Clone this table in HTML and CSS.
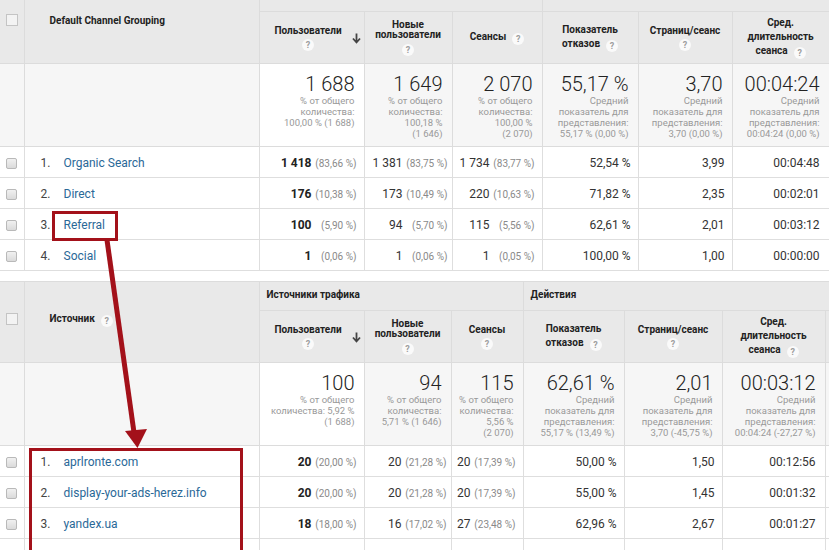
FILE: index.html
```html
<!DOCTYPE html>
<html lang="ru">
<head>
<meta charset="utf-8">
<title>Отчёт по каналам</title>
<link rel="stylesheet" href="styles.css">
</head>
<body>
<div class="page">
  <table class="ga ga-top">
    <colgroup>
      <col class="w-cb"><col class="w-dim"><col class="w105"><col class="w88"><col class="w90"><col class="w96"><col class="w94"><col class="w97">
    </colgroup>
    <thead>
      <tr class="grp">
        <th class="cb" rowspan="2"><span class="chk-head"></span></th>
        <th class="dimh" rowspan="2">Default Channel Grouping</th>
        <th class="grph" colspan="3"></th>
        <th class="grph" colspan="3"></th>
      </tr>
      <tr class="cols">
        <th class="sorted-h"><div class="mh"><div class="lbl">Пользователи<br><i class="q blk">?</i></div><svg class="sort" width="9" height="11" viewBox="0 0 9 11"><path d="M4.5 0.5v8M1 5.5l3.5 4 3.5-4" fill="none" stroke="#444" stroke-width="1.8"/></svg></div></th>
        <th><div class="mh"><div class="lbl tight">Новые<br>пользователи<br><i class="q blk t">?</i></div></div></th>
        <th><div class="mh"><div class="lbl">Сеансы<i class="q in">?</i></div></div></th>
        <th><div class="mh"><div class="lbl">Показатель<br>отказов<i class="q in">?</i></div></div></th>
        <th><div class="mh"><div class="lbl">Страниц/сеанс<br><i class="q blk">?</i></div></div></th>
        <th><div class="mh"><div class="lbl">Сред.<br>длительность<br>сеанса<i class="q in">?</i></div></div></th>
      </tr>
    </thead>
    <tbody>
      <tr class="tot">
        <td class="cb"></td><td></td>
        <td class="sorted"><div class="big">1 688</div><div class="sub">% от общего<br>количества:<br>100,00 % (1 688)</div></td>
        <td><div class="big">1 649</div><div class="sub">% от общего<br>количества:<br>100,18 %<br>(1 646)</div></td>
        <td><div class="big">2 070</div><div class="sub">% от общего<br>количества:<br>100,00 %<br>(2 070)</div></td>
        <td><div class="big">55,17 %</div><div class="sub">Средний<br>показатель для<br>представления:<br>55,17 % (0,00 %)</div></td>
        <td><div class="big">3,70</div><div class="sub">Средний<br>показатель для<br>представления:<br>3,70 (0,00 %)</div></td>
        <td><div class="big">00:04:24</div><div class="sub">Средний<br>показатель для<br>представления:<br>00:04:24 (0,00 %)</div></td>
      </tr>
      <tr class="row">
        <td class="cb"><span class="chk"></span></td>
        <td class="dim"><span class="n">1.</span><a href="#">Organic Search</a></td>
        <td class="m"><b>1 418</b><span class="p">(83,66 %)</span></td>
        <td class="m nu">1 381<span class="p">(83,75 %)</span></td>
        <td class="m">1 734<span class="p">(83,77 %)</span></td>
        <td class="m">52,54 %</td><td class="m">3,99</td><td class="m r9">00:04:48</td>
      </tr>
      <tr class="row">
        <td class="cb"><span class="chk"></span></td>
        <td class="dim"><span class="n">2.</span><a href="#">Direct</a></td>
        <td class="m"><b>176</b><span class="p">(10,38 %)</span></td>
        <td class="m nu">173<span class="p">(10,49 %)</span></td>
        <td class="m">220<span class="p">(10,63 %)</span></td>
        <td class="m">71,82 %</td><td class="m">2,35</td><td class="m r9">00:02:01</td>
      </tr>
      <tr class="row">
        <td class="cb"><span class="chk"></span></td>
        <td class="dim"><span class="n">3.</span><a href="#">Referral</a></td>
        <td class="m"><b>100</b><span class="p">(5,90 %)</span></td>
        <td class="m nu">94<span class="p">(5,70 %)</span></td>
        <td class="m">115<span class="p">(5,56 %)</span></td>
        <td class="m">62,61 %</td><td class="m">2,01</td><td class="m r9">00:03:12</td>
      </tr>
      <tr class="row">
        <td class="cb"><span class="chk"></span></td>
        <td class="dim"><span class="n">4.</span><a href="#">Social</a></td>
        <td class="m"><b>1</b><span class="p">(0,06 %)</span></td>
        <td class="m nu">1<span class="p">(0,06 %)</span></td>
        <td class="m">1<span class="p">(0,05 %)</span></td>
        <td class="m">100,00 %</td><td class="m">1,00</td><td class="m r9">00:00:00</td>
      </tr>
    </tbody>
  </table>

  <table class="ga ga-bot">
    <colgroup>
      <col class="w-cb"><col class="w-dim"><col class="w105"><col class="w87"><col class="w72"><col class="w101"><col class="w98"><col class="w103"><col class="w40">
    </colgroup>
    <thead>
      <tr class="grp">
        <th class="cb" rowspan="2"><span class="chk-head"></span></th>
        <th class="dimh" rowspan="2">Источник<i class="q in">?</i></th>
        <th class="grph" colspan="3">Источники трафика</th>
        <th class="grph" colspan="4">Действия</th>
      </tr>
      <tr class="cols">
        <th class="sorted-h"><div class="mh"><div class="lbl">Пользователи<br><i class="q blk">?</i></div><svg class="sort" width="9" height="11" viewBox="0 0 9 11"><path d="M4.5 0.5v8M1 5.5l3.5 4 3.5-4" fill="none" stroke="#444" stroke-width="1.8"/></svg></div></th>
        <th><div class="mh"><div class="lbl tight">Новые<br>пользователи<br><i class="q blk t">?</i></div></div></th>
        <th><div class="mh"><div class="lbl">Сеансы<br><i class="q blk">?</i></div></div></th>
        <th><div class="mh"><div class="lbl">Показатель<br>отказов<i class="q in">?</i></div></div></th>
        <th><div class="mh"><div class="lbl">Страниц/сеанс<br><i class="q blk">?</i></div></div></th>
        <th><div class="mh"><div class="lbl">Сред.<br>длительность<br>сеанса<i class="q in">?</i></div></div></th>
        <th></th>
      </tr>
    </thead>
    <tbody>
      <tr class="tot">
        <td class="cb"></td><td></td>
        <td class="sorted"><div class="big">100</div><div class="sub">% от общего<br>количества: 5,92 %<br>(1 688)</div></td>
        <td><div class="big">94</div><div class="sub">% от общего<br>количества:<br>5,71 % (1 646)</div></td>
        <td><div class="big">115</div><div class="sub">% от общего<br>количества:<br>5,56 %<br>(2 070)</div></td>
        <td><div class="big">62,61 %</div><div class="sub">Средний<br>показатель для<br>представления:<br>55,17 % (13,49 %)</div></td>
        <td><div class="big">2,01</div><div class="sub">Средний<br>показатель для<br>представления:<br>3,70 (-45,75 %)</div></td>
        <td><div class="big">00:03:12</div><div class="sub">Средний<br>показатель для<br>представления:<br>00:04:24 (-27,27 %)</div></td>
        <td></td>
      </tr>
      <tr class="row">
        <td class="cb"><span class="chk"></span></td>
        <td class="dim"><span class="n">1.</span><a href="#">aprlronte.com</a></td>
        <td class="m"><b>20</b><span class="p">(20,00 %)</span></td>
        <td class="m nu">20<span class="p">(21,28 %)</span></td>
        <td class="m">20<span class="p">(17,39 %)</span></td>
        <td class="m">50,00 %</td><td class="m">1,50</td><td class="m r9">00:12:56</td><td></td>
      </tr>
      <tr class="row">
        <td class="cb"><span class="chk"></span></td>
        <td class="dim"><span class="n">2.</span><a href="#">display-your-ads-herez.info</a></td>
        <td class="m"><b>20</b><span class="p">(20,00 %)</span></td>
        <td class="m nu">20<span class="p">(21,28 %)</span></td>
        <td class="m">20<span class="p">(17,39 %)</span></td>
        <td class="m">55,00 %</td><td class="m">1,45</td><td class="m r9">00:01:32</td><td></td>
      </tr>
      <tr class="row">
        <td class="cb"><span class="chk"></span></td>
        <td class="dim"><span class="n">3.</span><a href="#">yandex.ua</a></td>
        <td class="m"><b>18</b><span class="p">(18,00 %)</span></td>
        <td class="m nu">16<span class="p">(17,02 %)</span></td>
        <td class="m">27<span class="p">(23,48 %)</span></td>
        <td class="m">62,96 %</td><td class="m">2,67</td><td class="m r9">00:01:27</td><td></td>
      </tr>
      <tr class="row">
        <td class="cb"><span class="chk"></span></td>
        <td class="dim"></td>
        <td class="m"></td><td class="m"></td><td class="m"></td><td class="m"></td><td class="m"></td><td class="m"></td><td></td>
      </tr>
    </tbody>
  </table>
</div>

<svg class="overlay" width="829" height="550" viewBox="0 0 829 550">
  <rect x="53.5" y="212.5" width="63" height="27" fill="none" stroke="#a3111a" stroke-width="3"/>
  <rect x="30.5" y="449.5" width="211" height="130" fill="none" stroke="#a3111a" stroke-width="3"/>
  <line x1="107" y1="240" x2="134.5" y2="436" stroke="#a3111a" stroke-width="5"/>
  <polygon points="125,431 147,429 137.5,448" fill="#a3111a"/>
</svg>
</body>
</html>
```

FILE: styles.css
```css
* { box-sizing: border-box; }
html, body { margin: 0; padding: 0; background: #fff; }
body {
  width: 829px;
  height: 550px;
  overflow: hidden;
  position: relative;
  font-family: Roboto, "Noto Sans", Arial, sans-serif;
  color: #333;
}
.page {
  display: flex;
  flex-direction: column;
  gap: 10px;
  margin-top: -18px;
}
table.ga {
  border-collapse: collapse;
  table-layout: fixed;
}
.ga-top { width: 829px; }
.ga-bot { width: 865px; }
.w-cb { width: 24px; }
.w-dim { width: 235px; }
.w105 { width: 105px; }
.w88 { width: 88px; }
.w87 { width: 87px; }
.w90 { width: 90px; }
.w72 { width: 72px; }
.w96 { width: 96px; }
.w101 { width: 101px; }
.w94 { width: 94px; }
.w98 { width: 98px; }
.w97 { width: 97px; }
.w103 { width: 103px; }
.w40 { width: 40px; }

.ga th, .ga td {
  border: 1px solid #dcdcdc;
  padding: 0;
}
.ga th:first-child, .ga td:first-child { border-left: none; }

thead th {
  background: #e9e9e9;
  border-color: #d2d2d2;
  font-size: 10px;
  font-weight: bold;
  color: #222;
}
.grp th { height: 29px; }
.cols th { height: 52px; vertical-align: middle; }
th.cb { text-align: center; vertical-align: middle; padding-bottom: 7px; }
th.dimh {
  text-align: left;
  vertical-align: middle;
  padding-left: 25px;
  padding-bottom: 5px;
}
th.grph {
  text-align: left;
  vertical-align: middle;
  padding-left: 7px;
  padding-bottom: 3px;
}
.chk-head {
  display: inline-block;
  width: 12px;
  height: 12px;
  border: 1px solid #c4c4c4;
  background: #f3f3f3;
  vertical-align: middle;
}
.mh {
  display: flex;
  align-items: center;
  justify-content: center;
  padding: 0 3px 0 3px;
}
.sorted-h .mh { padding-left: 5px; }
.lbl {
  flex: 1;
  text-align: center;
  line-height: 14px;
}
.lbl.tight { line-height: 10px; }
.sort { flex: none; display: block; margin-top: 1px; }
.q {
  display: inline-block;
  width: 12px;
  height: 12px;
  border-radius: 50%;
  background: #fafafa;
  color: #9e9e9e;
  font-style: normal;
  font-size: 9px;
  line-height: 12px;
  text-align: center;
  font-weight: bold;
}
.q.in { margin-left: 6px; vertical-align: -2px; }
.q.blk { margin-top: 1px; vertical-align: top; }
.q.blk.t { margin-top: 4px; }

.tot td {
  background: #f6f6f6;
  height: 83px;
  vertical-align: top;
  text-align: right;
  padding: 9px 9px 0 0;
}
.tot td.sorted { background: #fff; }
.big {
  font-size: 20px;
  line-height: 22px;
  font-weight: 300;
  color: #222;
  white-space: nowrap;
}
.sub {
  font-size: 9.5px;
  line-height: 11px;
  color: #999;
  white-space: nowrap;
}

.row td {
  height: 31px;
  vertical-align: middle;
  font-size: 12px;
  color: #333;
  background: #fff;
  border-color: #dedede;
  padding-top: 1px;
}
.row td.cb { text-align: center; }
.chk {
  display: inline-block;
  width: 11px;
  height: 11px;
  border: 1px solid #b9b9b9;
  border-radius: 2px;
  background: linear-gradient(#f1f1f1, #dadada);
  vertical-align: middle;
}
.row td.dim { padding-left: 16px; white-space: nowrap; }
.n { display: inline-block; width: 23px; color: #444; }
.dim a { color: #2a6897; text-decoration: none; }
.row td.m {
  text-align: right;
  padding-right: 7px;
  white-space: nowrap;
}
.row td.m.nu { padding-right: 4px; }
.row td.m.r9 { padding-right: 9px; }
.m b { font-weight: bold; color: #222; }
.p {
  display: inline-block;
  width: 45px;
  text-align: right;
  font-size: 10px;
  color: #8a8a8a;
}

.overlay {
  position: absolute;
  left: 0;
  top: 0;
  pointer-events: none;
}
```
